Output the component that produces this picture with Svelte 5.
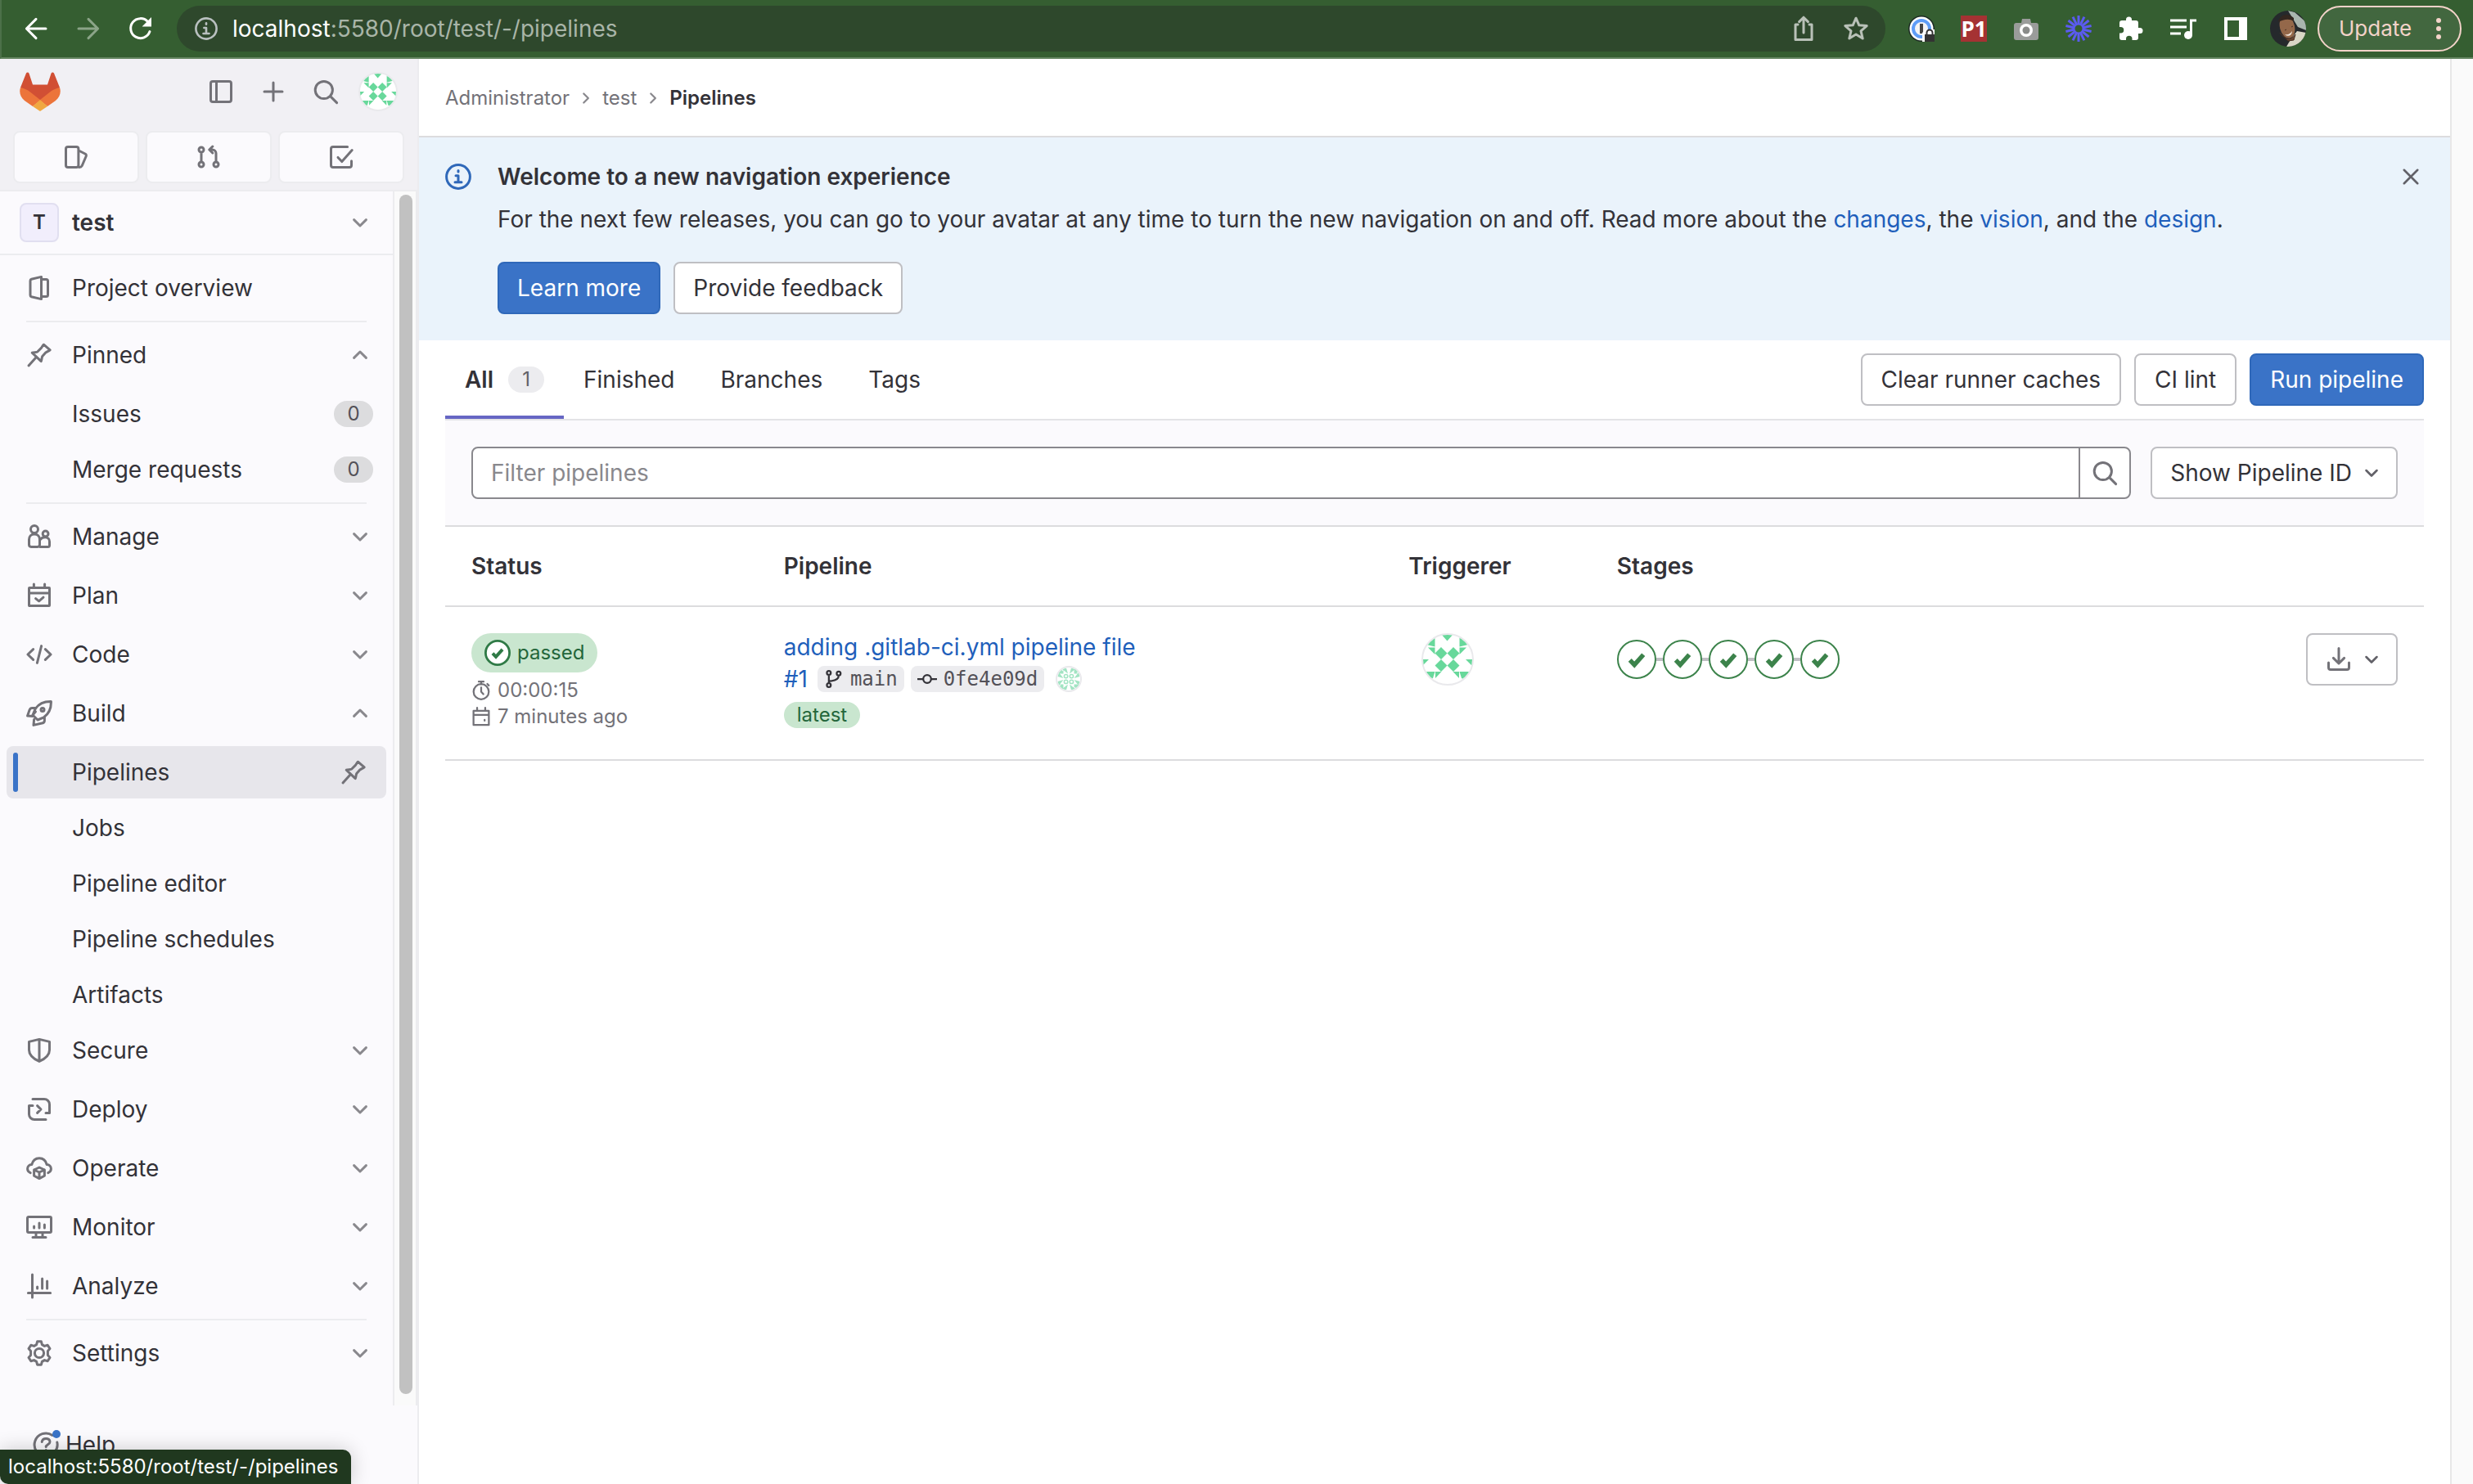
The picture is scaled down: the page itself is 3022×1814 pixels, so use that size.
<script>
  const check = 'M5 8.3 7 10.4 11 5.9';

  const icons = {
    back: ['M14 8H2.5M8 2.2 2.2 8 8 13.8'],
    forward: ['M2 8h11.5M8 2.2 13.8 8 8 13.8'],
    panel: ['M3 1.75h10c.7 0 1.25.55 1.25 1.25v10c0 .7-.55 1.25-1.25 1.25H3c-.7 0-1.25-.55-1.25-1.25V3c0-.7.55-1.25 1.25-1.25zM5.25 2v12'],
    plus: ['M8 2.5v11M2.5 8h11'],
    search: ['M12.2 7a5.3 5.3 0 1 1-10.6 0 5.3 5.3 0 0 1 10.6 0zM10.8 10.8 14.8 14.8'],
    issues: ['M3 1.75h5.2c.7 0 1.25.55 1.25 1.25v10c0 .7-.55 1.25-1.25 1.25H3c-.7 0-1.25-.55-1.25-1.25V3c0-.7.55-1.25 1.25-1.25zM9.6 4l3.9 2c.6.3.8.9.6 1.5L11.6 13.3c-.3.6-.8.9-1.6.9'],
    merge: ['M5 3.5a1.5 1.5 0 1 1-3 0 1.5 1.5 0 0 1 3 0zM5 12.5a1.5 1.5 0 1 1-3 0 1.5 1.5 0 0 1 3 0zM14 12.5a1.5 1.5 0 1 1-3 0 1.5 1.5 0 0 1 3 0zM3.5 5v6M12.5 11V5.8c0-1.3-1-2.3-2.3-2.3H8.6M10.4 1.5l-2 2 2 2'],
    todo: ['M11.8 1.75H3c-.7 0-1.25.55-1.25 1.25v10c0 .7.55 1.25 1.25 1.25h10c.7 0 1.25-.55 1.25-1.25v-2.6M6 8.2l2.4 2.6 6.2-7'],
    down: ['M4.3 6.3 8 10l3.7-3.7'],
    up: ['M4.3 9.7 8 6l3.7 3.7'],
    right: ['M6.2 4.3 9.9 8l-3.7 3.7'],
    overview: ['M9.25 1.2v13.6L3.2 13.4a1 1 0 0 1-.7-1V3.6a1 1 0 0 1 .7-1zM9.5 2.75h2.7c.7 0 1.05.4 1.05 1v8.5c0 .6-.4 1-1.05 1H9.5'],
    pin: ['M10.7 1.6l3.9 3.3c-.9.7-2 1-2.6 1.5L10 8.6c-.6.8-.4 2.4-.9 3.2L3.6 6.6c1.200-.5 2.600 0 3.400-.7l2.200-2.200c.5-.6.8-1.500 1.500-2.100zM6.200 9.200 1.500 14.500'],
    manage: ['M7.25 3.5a2.25 2.25 0 1 1-4.5 0 2.25 2.25 0 0 1 4.5 0zM13.5 6.200a1.700 1.700 0 1 1-3.400 0 1.700 1.700 0 0 1 3.400 0zM5 6.500c2 0 3.250 1.300 3.250 3.200v3.200c0 .7-.5 1.300-1.250 1.300H3c-.7 0-1.250-.5-1.250-1.300V9.700C1.750 7.800 3 6.500 5 6.500zM8.600 9.800c.6-.9 1.700-1.400 3-1.400 1.700 0 2.650 1.200 2.650 2.600v2.200c0 .6-.4 1-1 1H8.500'],
    plan: ['M2 3.250h12c.15 0 .25.1.25.25v10.500c0 .15-.1.25-.25.25H2c-.15 0-.25-.1-.25-.25V3.500c0-.15.1-.25.25-.25zM1.750 6.500h12.500M4.700 1v2M11.300 1v2M5.800 9.800l2 1.600 2.700-2.300'],
    code: ['M4.300 4.800 1 8l3.300 3.200M11.700 4.800 15 8l-3.300 3.200M9.300 2.800 6.700 13.200'],
    build: ['M15.200.8C11.500.7 7.700 2.200 5.600 5.200L4 9l3 3 3.800-1.600c3-2.100 4.500-5.900 4.400-9.600zM5.800 4.800H3.600c-.7 0-1.200.3-1.500 1L.8 9.500l3.200.2M11.200 10.200v2.200c0 .7-.3 1.200-1 1.500l-5.700 1.300.3-3.400M4 9l1.700-2M11 5.700a1 1 0 1 1-2 0 1 1 0 0 1 2 0z'],
    secure: ['M8 1.200l6.250 1.500v5c0 3-2.500 5.300-6.250 7C4.250 13 1.750 10.700 1.750 7.700v-5zM8 1.200v13.300'],
    deploy: ['M4 1.750h7A3.250 3.250 0 0 1 14.250 5v5.250H12M12 14.250H5A3.250 3.250 0 0 1 1.750 11V5.750H4M6.800 5.800 9 8l-2.200 2.200'],
    operate: ['M2.600 10.800C1.400 10.300.8 9.500.8 8.400c0-1.500 1.100-2.500 2.600-2.600C4 3.500 5.700 1.900 8 1.900s4 1.600 4.600 3.900c1.500.1 2.600 1.100 2.600 2.600 0 1.100-.6 1.900-1.800 2.400M8 7.500l3.200 1.500v3.600L8 14.300l-3.200-1.700V9zM4.800 9 8 10.500 11.200 9M8 10.500v3.800'],
    monitor: ['M1.500 1.750h13c.4 0 .75.3.75.7v8.100c0 .4-.3.700-.75.700h-13c-.4 0-.75-.3-.75-.7v-8.100c0-.4.3-.7.750-.7zM4 14.250h8M6 11.500v2.500M10 11.500v2.500M4.800 7.500v1M8 5.500v3M11.200 6.500v2'],
    analyze: ['M3.750 1v14M1.200 12.250h13.600M6.800 8.500v1M9.800 3.500v6M12.800 5v4.500'],
    settings: ['M6.800.9h2.400l.5 1.900 1.500.9 1.900-.6 1.400 2.200-1.300 1.400v2.600l1.300 1.400-1.400 2.200-1.900-.6-1.500.9-.5 1.900H6.800l-.5-1.900-1.500-.9-1.900.6-1.400-2.200 1.300-1.400V6.700L1.500 5.300l1.400-2.200 1.900.6 1.500-.9zM10.800 8a2.800 2.800 0 1 1-5.600 0 2.800 2.800 0 0 1 5.600 0z'],
    info: ['M15.200 8A7.200 7.200 0 1 1 .8 8a7.200 7.200 0 0 1 14.400 0zM6.500 7.400H8v3.800M6 11.400h4M8 4.200v.8'],
    close: ['M3.300 3.300l9.400 9.400M12.700 3.300l-9.400 9.400'],
    download: ['M8 1.200v9M4.700 7.200 8 10.500l3.300-3.300M1.750 10v3c0 .8.500 1.250 1.250 1.250h10c.8 0 1.250-.5 1.250-1.250v-3'],
    timer: ['M14.200 9A6.200 6.200 0 1 1 1.800 9a6.200 6.200 0 0 1 12.400 0zM8 1v2M6 .8h4M8 5.500V9l1.800 2M13 2.700l1.200 1.200'],
    calendar: ['M1.750 3.250h12.500v11.500H1.750zM1.750 6.500h12.500M4.700.8v2.500M11.300.8v2.500M10.800 10.500v.8'],
    branch: ['M5.500 3a1.600 1.600 0 1 1-3.200 0 1.600 1.600 0 0 1 3.200 0zM5.500 13a1.600 1.600 0 1 1-3.200 0 1.600 1.600 0 0 1 3.200 0zM13.500 3.500a1.600 1.600 0 1 1-3.200 0 1.600 1.600 0 0 1 3.200 0zM3.900 4.700v6.600M11.900 5.200c0 3-3 4.300-7.500 4.500'],
    commit: ['M11.200 8a3.200 3.200 0 1 1-6.400 0 3.200 3.200 0 0 1 6.400 0zM.5 8h4.300M11.200 8h4.300'],
    help: ['M12 2.200A7 7 0 1 0 14.900 6.500M5.600 6.200c.2-1.200 1.200-2 2.500-2 1.400 0 2.400.8 2.400 2 0 1.600-2.400 1.700-2.400 3.100M8.100 11.300v.9'],
    share: ['M4.500 5.500H3v9.300h10V5.500h-1.500M8 10.500V1.200M5.300 3.800 8 1.100l2.700 2.700'],
    star: ['M8 1.600l1.900 4.300 4.700.4-3.600 3.100 1.100 4.600L8 11.500 3.900 14 5 9.400 1.400 6.300l4.700-.4z']
  };

  const top = [
    { label: 'Manage', icon: 'manage' },
    { label: 'Plan', icon: 'plan' },
    { label: 'Code', icon: 'code' },
    {
      label: 'Build',
      icon: 'build',
      open: true,
      items: [
        { label: 'Pipelines', active: true },
        { label: 'Jobs' },
        { label: 'Pipeline editor' },
        { label: 'Pipeline schedules' },
        { label: 'Artifacts' }
      ]
    },
    { label: 'Secure', icon: 'secure' },
    { label: 'Deploy', icon: 'deploy' },
    { label: 'Operate', icon: 'operate' },
    { label: 'Monitor', icon: 'monitor' },
    { label: 'Analyze', icon: 'analyze' }
  ];
  const pinned = {
    label: 'Pinned',
    icon: 'pin',
    open: true,
    items: [
      { label: 'Issues', count: 0 },
      { label: 'Merge requests', count: 0 }
    ]
  };
  const settings = { label: 'Settings', icon: 'settings' };
  const tabs = ['Finished', 'Branches', 'Tags'];
  const rays = Array.from({ length: 14 }, (_, i) => (i * 360) / 14);
  const quarters = [0, 90, 180, 270];
  const stages = [1, 2, 3, 4, 5];
</script>

{#snippet icon(name, cls = '')}
  <svg class="icon {cls}" viewBox="0 0 16 16" aria-hidden="true">
    {#each icons[name] as d}<path {d} />{/each}
  </svg>
{/snippet}

{#snippet identicon()}
  <svg class="identicon" viewBox="2 2 60 60" aria-hidden="true">
    <g fill="#68d89b">
      <path d="M24 1h15l-7.500 8.500zM16.500 2v14.500L6 14zM46.500 2v14.500L57 14zM8 17.500h8.500V26zM55 17.500h-8.500V26zM1 32h8l-8 8zM62 32h-8l8 8z" />
      <path d="M3 47h13.500l-2.500 8-2 1-4-2zM17 47h7.500L17 55zM60 47H46.500l2.500 8 2 1 4-2zM46 47h-7.500l7.500 8z" />
      <path d="M24 17l7.500 7.500L24 32l-7.500-7.500zM39 17l7.500 7.500L39 32l-7.500-7.500zM24 32l7.500 7.500L24 47l-7.500-7.500zM39 32l7.500 7.500L39 47l-7.500-7.500z" />
    </g>
  </svg>
{/snippet}

{#snippet section(s)}
  <button class="nav-row" aria-expanded={!!s.open}>
    {@render icon(s.icon)}
    <span>{s.label}</span>
    {@render icon(s.open ? 'up' : 'down', 'chev')}
  </button>
  {#if s.items}
    <ul>
      {#each s.items as item}
        <li>
          <a class="nav-row sub" class:active={item.active} href="#{item.label}">
            <span>{item.label}</span>
            {#if item.count !== undefined}<span class="count">{item.count}</span>{/if}
            {#if item.active}{@render icon('pin', 'unpin')}{/if}
          </a>
        </li>
      {/each}
    </ul>
  {/if}
{/snippet}

<div class="window">
  <header class="browser">
    <button class="tool" aria-label="Back">{@render icon('back')}</button>
    <button class="tool dim" aria-label="Forward">{@render icon('forward')}</button>
    <button class="tool" aria-label="Reload">
      <svg class="icon" viewBox="0 0 16 16"><path d="M13.500 9.800A6 6 0 1 1 12.300 3.800" /><path class="solid" d="M14.500 1v5.700H8.800z" /></svg>
    </button>
    <div class="address">
      {@render icon('info', 'site')}
      <span class="url"><b>localhost</b>:5580/root/test/-/pipelines</span>
      <button class="tool soft" aria-label="Share">{@render icon('share')}</button>
      <button class="tool soft" aria-label="Bookmark">{@render icon('star')}</button>
    </div>
    <div class="extensions">
      <button class="tool" aria-label="Password manager">
        <svg viewBox="0 0 32 32"><circle cx="16" cy="16" r="16" fill="#1d2b24" /><circle cx="16" cy="16" r="14.500" fill="#fff" /><circle cx="16" cy="16" r="10" fill="#f4f4f4" stroke="#5f9df7" stroke-width="4" /><rect x="14" y="10" width="4" height="12" fill="#444" /><path d="M17 32V21l5-4h10v15z" fill="#fff" /><path d="M20 23h12v9H20z" fill="#333" /><path d="M22.500 23v-2a3.500 3.500 0 0 1 7 0v2" fill="none" stroke="#333" stroke-width="2" /></svg>
      </button>
      <button class="tool" aria-label="P1"><span class="p1">P1</span></button>
      <button class="tool" aria-label="Screenshot">
        <svg viewBox="0 0 32 32"><path d="M4 9h6l1-5h10l1 5h6a3 3 0 0 1 3 3v15a3 3 0 0 1-3 3H4a3 3 0 0 1-3-3V12a3 3 0 0 1 3-3z" fill="#9a9c9a" /><circle cx="16" cy="18" r="8" fill="#fff" /><circle cx="16" cy="18" r="4.500" fill="#8a8c8a" /></svg>
      </button>
      <button class="tool" aria-label="Loom">
        <svg viewBox="0 0 32 32"><g stroke="#5b5bf0" stroke-width="3">{#each rays as r}<path d="M16 0v10" transform="rotate({r} 16 16)" />{/each}</g><circle cx="16" cy="16" r="5.500" fill="none" stroke="#5b5bf0" stroke-width="2" /></svg>
      </button>
      <button class="tool" aria-label="Extensions">
        <svg viewBox="0 0 32 32"><path fill="#fff" d="M27 15h-2V9a3 3 0 0 0-3-3h-5V5a3.500 3.500 0 0 0-7 0v1H5a3 3 0 0 0-3 3v5h1.500a3.700 3.700 0 0 1 0 7.500H2V27a3 3 0 0 0 3 3h5v-1.500a3.700 3.700 0 0 1 7.500 0V30H22a3 3 0 0 0 3-3v-5h2a3.500 3.500 0 0 0 0-7z" /></svg>
      </button>
      <button class="tool" aria-label="Media">
        <svg viewBox="0 0 32 32"><path d="M0 6h20M0 14h20M0 22h13" stroke="#fff" stroke-width="3" /><circle cx="22" cy="24" r="5" fill="#fff" /><path d="M25.500 24V6H32" fill="none" stroke="#fff" stroke-width="3" /></svg>
      </button>
      <button class="tool" aria-label="Side panel">
        <svg viewBox="0 0 32 32"><path d="M2 2h28v28H2zM6 6v20h14V6z" fill="#fff" fill-rule="evenodd" /></svg>
      </button>
      <button class="tool" aria-label="Profile">
        <svg class="profile" viewBox="0 0 44 44"><defs><clipPath id="face"><circle cx="22" cy="22" r="22" /></clipPath></defs><g clip-path="url(#face)"><path d="M0 0h44v44H0z" fill="#25292c" /><path d="M22 0l8 2 14 12v10l-10-4z" fill="#a9b5ae" /><path d="M20 44l6-10 7-9 11 2v17z" fill="#d9d6c6" /><ellipse cx="21" cy="20" rx="9" ry="14" fill="#94684a" transform="rotate(-14 21 20)" /><path d="M10 14C11 6 21 1 29 9l0 4c-6-4-13-2-19 1z" fill="#33261f" /><path d="M18 24l2-1M26 20l2-1M12 27c4 6 12 12 19 2l-2 7-7 1z" stroke="#4b3124" fill="#6b4734" /><path d="M18 29c4 1 7-1 9-4 0 5-5 8-9 4z" fill="#efe4d8" /></g></svg>
      </button>
    </div>
    <button class="update">Update
      <svg viewBox="0 0 8 32"><circle cx="4" cy="6" r="3" /><circle cx="4" cy="16" r="3" /><circle cx="4" cy="26" r="3" /></svg>
    </button>
  </header>

  <div class="body">
    <aside>
      <div class="side-top">
        <div class="side-bar">
          <a class="logo" href="#home" aria-label="Home">
            <svg viewBox="0 0 50 48"><path fill="#d14f34" d="M49 19 42 1.500a2 2 0 0 0-3.500.2L34 15.500H16L11.500 1.700A2 2 0 0 0 8 1.500L1 19l24 16z" /><path fill="#ec743a" d="M1 19c-2 6 0 12 5 16l10 7 9-7 9 7 10-7c5-4 7-10 5-16-4 1-7 2-10 4L25 34 11 23c-3-2-6-3-10-4z" /><path fill="#f0a840" d="M16 42l9 6 9-6-9-8z" /></svg>
          </a>
          <button class="tool" aria-label="Toggle sidebar">{@render icon('panel')}</button>
          <button class="tool" aria-label="Create new">{@render icon('plus')}</button>
          <button class="tool" aria-label="Search">{@render icon('search')}</button>
          <button class="avatar mid" aria-label="User menu">{@render identicon()}</button>
        </div>
        <div class="shortcuts">
          <button aria-label="Assigned issues">{@render icon('issues')}</button>
          <button aria-label="Merge requests">{@render icon('merge')}</button>
          <button aria-label="To-do list">{@render icon('todo')}</button>
        </div>
      </div>
      <div class="scroller">
        <nav>
          <button class="context">
            <span class="letter">T</span>
            <b>test</b>
            {@render icon('down', 'chev')}
          </button>
          <div class="nav-list">
            <a class="nav-row" href="#overview">{@render icon('overview')}<span>Project overview</span></a>
            <hr />
            {@render section(pinned)}
            <hr />
            {#each top as s}{@render section(s)}{/each}
            <hr />
            {@render section(settings)}
          </div>
        </nav>
        <div class="track"><div class="thumb"></div></div>
      </div>
      <div class="side-foot">
        <button class="help">{@render icon('help')}<i></i>Help</button>
      </div>
      <div class="status-bar">localhost:5580/root/test/-/pipelines</div>
    </aside>

    <main>
      <nav class="crumbs" aria-label="Breadcrumb">
        <a href="#admin">Administrator</a>{@render icon('right')}
        <a href="#test">test</a>{@render icon('right')}
        <a class="here" href="#pipelines">Pipelines</a>
      </nav>

      <section class="banner">
        {@render icon('info', 'blue')}
        <div class="banner-text">
          <h2>Welcome to a new navigation experience</h2>
          <p>For the next few releases, you can go to your avatar at any time to turn the new navigation on and off. Read more about the <a href="#changes">changes</a>, the <a href="#vision">vision</a>, and the <a href="#design">design</a>.</p>
          <div class="actions">
            <button class="btn primary">Learn more</button>
            <button class="btn">Provide feedback</button>
          </div>
        </div>
        <button class="tool" aria-label="Dismiss">{@render icon('close')}</button>
      </section>

      <div class="content">
        <div class="tab-bar">
          <div class="tabs" role="tablist">
            <button class="tab on" role="tab" aria-selected="true">All <span class="pill">1</span></button>
            {#each tabs as t}<button class="tab" role="tab" aria-selected="false">{t}</button>{/each}
          </div>
          <div class="tab-actions">
            <button class="btn">Clear runner caches</button>
            <button class="btn">CI lint</button>
            <button class="btn primary">Run pipeline</button>
          </div>
        </div>

        <div class="filter">
          <div class="search-box">
            <input type="text" placeholder="Filter pipelines" aria-label="Filter pipelines" />
            <button aria-label="Search">{@render icon('search')}</button>
          </div>
          <button class="btn drop" aria-haspopup="listbox">Show Pipeline ID {@render icon('down')}</button>
        </div>

        <table>
          <colgroup><col class="c3" /><col class="c6" /><col class="c2" /><col class="c6" /><col class="c2" /></colgroup>
          <thead>
            <tr><th>Status</th><th>Pipeline</th><th>Triggerer</th><th>Stages</th><th aria-label="Actions"></th></tr>
          </thead>
          <tbody>
            <tr>
              <td>
                <a class="passed" href="#status">
                  <svg viewBox="0 0 16 16" aria-hidden="true"><circle cx="8" cy="8" r="7.300" /><path d={check} /></svg>passed
                </a>
                <div class="meta">{@render icon('timer')}00:00:15</div>
                <div class="meta">{@render icon('calendar')}7 minutes ago</div>
              </td>
              <td>
                <a class="title" href="#commit">adding .gitlab-ci.yml pipeline file</a>
                <div class="refs">
                  <a href="#1">#1</a>
                  <span class="ref">{@render icon('branch')}main</span>
                  <span class="ref">{@render icon('commit')}0fe4e09d</span>
                  <span class="avatar small">
                    <svg class="identicon" viewBox="0 0 28 28" aria-hidden="true">
                      <g fill="#a2e4c3">
                        {#each quarters as q}
                          <path transform="rotate({q} 14 14)" d="M6 2l5-1.500 2 7zM22 2l-5-1.500-2 7zM2 4l4-1v4H2zM7.500 7.500H3L7.500 3z" />
                        {/each}
                      </g>
                      <g fill="none" stroke="#a2e4c3" stroke-width="1.500">
                        <circle cx="10.600" cy="10.600" r="2.200" /><circle cx="17.400" cy="10.600" r="2.200" /><circle cx="10.600" cy="17.400" r="2.200" /><circle cx="17.400" cy="17.400" r="2.200" />
                      </g>
                    </svg>
                  </span>
                </div>
                <span class="latest">latest</span>
              </td>
              <td><div class="avatar large">{@render identicon()}</div></td>
              <td>
                <div class="stages">
                  {#each stages as n}
                    <button aria-label="Stage {n}: passed"><svg viewBox="0 0 16 16"><path d={check} /></svg></button>
                  {/each}
                </div>
              </td>
              <td class="end">
                <button class="btn drop" aria-label="Download artifacts">{@render icon('download', 'big')}{@render icon('down')}</button>
              </td>
            </tr>
          </tbody>
        </table>
      </div>
    </main>
    <div class="page-track"></div>
  </div>
</div>

<style>
  :global(body) { margin: 0; }
  .window {
    display: flex;
    flex-direction: column;
    height: 100vh;
    overflow: hidden;
    background: #fff;
    color: #333238;
    font: 28px/40px Inter, "Liberation Sans", sans-serif;
  }
  * { box-sizing: border-box; }
  button, input { font: inherit; color: inherit; background: none; border: 0; padding: 0; margin: 0; }
  a { color: #1f5fbb; text-decoration: none; }
  .icon { width: 32px; height: 32px; flex: none; display: block; fill: none; stroke: currentColor; stroke-width: 1.500; stroke-linejoin: round; stroke-linecap: round; }
  .solid { fill: currentColor; stroke: none; }
  .tool { display: flex; align-items: center; justify-content: center; width: 64px; height: 56px; flex: none; }
  .tool > svg { width: 32px; height: 32px; }

  .browser { display: flex; align-items: center; flex: none; height: 72px; padding: 0 14px 0 10px; background: #355e31; border-left: 2px solid #4c7049; border-bottom: 2px solid #658662; color: #fff; }
  .dim { color: #8ba488; }
  .address { display: flex; align-items: center; flex: 1; height: 56px; margin-left: 12px; padding: 0 4px 0 22px; border-radius: 28px; background: #2e482c; }
  .site { width: 28px; height: 28px; color: #b9c0c0; }
  .url { flex: 1; margin-left: 18px; color: #a9b5a8; }
  .url b { color: #fff; font-weight: 400; }
  .soft { color: #b9c1b8; }
  .extensions { display: flex; margin-left: 12px; }
  .tool > .profile { width: 44px; height: 44px; }
  .p1 { width: 32px; height: 32px; background: #a53233; color: #fff; font: bold 26px/32px "Open Sans", sans-serif; text-align: center; }
  .update { display: flex; align-items: center; justify-content: space-between; width: 176px; height: 56px; margin-left: 4px; padding: 0 22px 0 24px; border: 2px solid #f3d3c9; border-radius: 28px; background: #42673f; color: #f3d3c9; font-size: 26px; }
  .update svg { width: 8px; height: 32px; fill: #f3d3c9; }

  .body { display: flex; flex: 1; min-height: 0; }
  aside { position: relative; display: flex; flex-direction: column; flex: none; width: 512px; border-right: 2px solid #ececef; background: #fbfafd; }
  .side-top { padding: 16px 16px 8px; background: #f1f0f4; }
  .side-bar { display: flex; align-items: center; height: 48px; padding: 0 8px; color: #737278; }
  .logo { margin-right: auto; }
  .logo svg { display: block; width: 50px; height: 48px; }
  .side-bar .mid { margin-left: 8px; }
  .avatar { display: block; flex: none; border: 2px solid #e9e9ec; border-radius: 50%; overflow: hidden; background: #fff; }
  .identicon { display: block; width: 100%; height: 100%; }
  .mid { width: 48px; height: 48px; }
  .large { width: 64px; height: 64px; margin-left: 16px; }
  .small { width: 32px; height: 32px; }
  .shortcuts { display: flex; gap: 8px; margin-top: 24px; }
  .shortcuts button { display: flex; flex: 1; align-items: center; justify-content: center; height: 64px; border: 2px solid #ececef; border-radius: 8px; background: #fbfafd; color: #737278; }
  .scroller { display: flex; flex: none; height: calc(100vh - 328px); border-top: 2px solid #ececef; overflow: hidden; }
  .scroller nav { flex: 1; border-right: 2px solid #ececef; }
  .track { width: 28px; padding: 4px 4px 14px 6px; background: #fafafa; border-right: 2px solid #ececef; }
  .thumb { height: 100%; border-radius: 8px; background: #c1c1c1; }
  .context { display: flex; align-items: center; width: 100%; height: 78px; padding: 0 24px; border-bottom: 2px solid #ececef; text-align: left; }
  .context b { flex: 1; margin-left: 16px; font-weight: 600; }
  .letter { width: 48px; height: 48px; border: 2px solid #e1dff0; border-radius: 8px; background: #f1eefc; font: 600 24px/44px Inter, sans-serif; text-align: center; }
  .nav-list { padding: 8px; }
  .nav-row { display: flex; align-items: center; width: 100%; height: 64px; margin-bottom: 8px; padding: 0 16px 0 24px; border-radius: 8px; color: #333238; text-align: left; }
  .nav-row > span:not(.count) { flex: 1; }
  .nav-row > .icon { margin-right: 24px; color: #737278; }
  .nav-row > .chev { margin-right: 0; color: #89888d; }
  .context .chev { margin-right: 0; color: #89888d; }
  ul { list-style: none; margin: 0; padding: 0; }
  .sub { padding-left: 80px; margin-bottom: 4px; }
  .count { width: 48px; height: 32px; border-radius: 16px; background: #dcdcde; color: #535158; font-size: 24px; line-height: 32px; text-align: center; }
  .nav-row.active { padding-left: 8px; background: #e7e6eb; }
  .active::before { content: ""; width: 6px; height: 48px; margin-right: 66px; border-radius: 3px; background: #3a73c7; }
  .nav-row > .unpin { margin-right: 8px; }
  hr { height: 2px; margin: 8px 24px; border: 0; background: #ececef; }
  .side-foot { flex: 1; padding: 16px; }
  .help { position: relative; display: flex; align-items: center; height: 64px; padding: 0 24px; }
  .help .icon { margin-right: 8px; color: #737278; }
  .help i { position: absolute; left: 48px; top: 14px; width: 10px; height: 10px; border-radius: 5px; background: #3a73c7; }
  .status-bar { position: absolute; left: 0; bottom: 0; height: 42px; padding: 0 16px 0 10px; border-radius: 0 10px 0 10px; background: #20381f; color: #fff; font-size: 24px; line-height: 42px; box-shadow: 0 0 24px #0003; }

  main { flex: 1; min-width: 0; }
  .crumbs { display: flex; align-items: center; height: 96px; padding: 2px 32px 0; border-bottom: 2px solid #dcdcde; font-size: 24px; }
  .crumbs a { color: #737278; }
  .crumbs .here { color: #333238; font-weight: 600; }
  .crumbs .icon { width: 24px; height: 24px; margin: 0 8px; color: #89888d; }
  .banner { display: flex; align-items: flex-start; padding: 32px 16px 32px 32px; background: #eaf3fb; }
  .blue { color: #2f68b9; }
  .banner-text { flex: 1; margin-left: 32px; }
  h2 { margin: 0; font-size: 28px; line-height: 32px; font-weight: 600; }
  p { margin: 16px 0 32px; }
  .banner .tool { height: 32px; color: #626168; }
  .banner .tool .icon { width: 28px; height: 28px; }
  .actions, .tab-actions { display: flex; gap: 16px; }
  .btn { height: 64px; padding: 0 22px; border: 2px solid #bfbfc3; border-radius: 8px; background: #fff; color: #333238; white-space: nowrap; }
  .tab-actions .btn { padding: 0 23px; }
  .primary { border-color: #2f68b9; background: #3a73c7; color: #fff; }
  .drop { display: inline-flex; align-items: center; gap: 10px; padding-right: 16px; }
  .drop .icon { width: 28px; height: 28px; color: #626168; }
  .drop .big { width: 32px; height: 32px; color: #737278; }

  .content { padding: 0 32px; }
  .tab-bar { display: flex; align-items: center; justify-content: space-between; height: 98px; border-bottom: 2px solid #e3e3e6; }
  .tabs { display: flex; align-self: stretch; }
  .tab { padding: 4px 32px 0 24px; border-bottom: 4px solid transparent; }
  .tab.on { display: flex; align-items: center; gap: 18px; padding-right: 24px; border-color: #6666c4; font-weight: 600; }
  .pill { width: 44px; height: 32px; border-radius: 16px; background: #ececef; color: #626168; font-size: 24px; line-height: 32px; font-weight: 400; }
  .filter { display: flex; gap: 24px; padding: 32px; border-bottom: 2px solid #dcdcde; background: #fbfafd; }
  .search-box { display: flex; flex: 1; height: 64px; border: 2px solid #89888d; border-radius: 8px; background: #fff; overflow: hidden; }
  .search-box input { flex: 1; padding: 0 22px; outline: 0; }
  input::placeholder { color: #89888d; opacity: 1; }
  .search-box button { display: flex; align-items: center; justify-content: center; width: 62px; border-left: 2px solid #89888d; color: #737278; }
  table { width: 100%; table-layout: fixed; border-collapse: separate; border-spacing: 0; text-align: left; }
  .c3 { width: 15.79%; }
  .c6 { width: 31.58%; }
  .c2 { width: 10.53%; }
  th { height: 98px; padding: 0 32px; border-bottom: 2px solid #dcdcde; font-weight: 600; }
  td { height: 188px; padding: 32px 32px 36px; border-bottom: 2px solid #dcdcde; vertical-align: top; }
  .passed { display: flex; align-items: center; gap: 8px; width: max-content; height: 48px; margin-bottom: 6px; padding: 0 16px; border-radius: 24px; background: #c9e6cf; color: #24663b; font-size: 24px; }
  .passed svg { width: 32px; height: 32px; fill: #fff; stroke: #2f7a46; stroke-width: 1.400; }
  .passed path { fill: none; stroke-width: 2; }
  .meta { display: flex; align-items: center; gap: 8px; height: 32px; color: #737278; font-size: 24px; }
  .meta .icon { width: 24px; height: 24px; }
  .title { display: block; height: 38px; line-height: 34px; }
  .refs { display: flex; align-items: center; gap: 8px; height: 36px; }
  .refs > a { margin-right: 4px; }
  .ref { display: flex; align-items: center; gap: 8px; height: 32px; padding: 0 8px; border-radius: 8px; background: #ececef; color: #535158; font: 24px/32px "DejaVu Sans Mono", "Liberation Mono", monospace; }
  .ref .icon { width: 24px; height: 24px; color: #333238; }
  .refs .small { margin-left: 6px; }
  .latest { display: block; width: max-content; height: 32px; margin-top: 10px; padding: 0 16px; border-radius: 16px; background: #c9e6cf; color: #24663b; font-size: 24px; line-height: 32px; }
  .stages { display: flex; margin-top: 8px; }
  .stages button { display: flex; align-items: center; justify-content: center; position: relative; width: 48px; height: 48px; border: 2px solid #3c834b; border-radius: 50%; }
  .stages button + button { margin-left: 8px; }
  .stages button + button::before { content: ""; position: absolute; left: -10px; top: 20px; width: 8px; height: 4px; background: #bfbfc3; }
  .stages svg { flex: none; width: 44px; height: 44px; fill: none; stroke: #3c834b; stroke-width: 2; }
  .end { text-align: right; }
  .page-track { flex: none; width: 28px; border-left: 2px solid #e8e8e8; background: #fafafa; }
</style>
